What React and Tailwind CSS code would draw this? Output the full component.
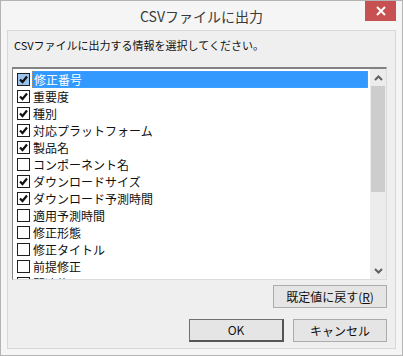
const items = [
  { label: '修正番号', checked: true },
  { label: '重要度', checked: true },
  { label: '種別', checked: true },
  { label: '対応プラットフォーム', checked: true },
  { label: '製品名', checked: true },
  { label: 'コンポーネント名', checked: false },
  { label: 'ダウンロードサイズ', checked: true },
  { label: 'ダウンロード予測時間', checked: true },
  { label: '適用予測時間', checked: false },
  { label: '修正形態', checked: false },
  { label: '修正タイトル', checked: false },
  { label: '前提修正', checked: false },
  { label: '関連修正', checked: false },
];

const font = "font-['Noto_Sans_CJK_JP','Liberation_Sans',sans-serif]";

const Check = ({ checked, focused }) => (
  <div
    className={`w-[13px] h-[13px] shrink-0 border border-[#1e1e1e] flex items-center justify-center ${
      focused ? 'bg-[#9cc3ee]' : 'bg-white'
    }`}
  >
    {checked && (
      <svg width="9" height="9" viewBox="0 0 9 9">
        <path d="M1 4.5 L3.5 7 L8 1.5" fill="none" stroke="#111" strokeWidth="2.2" />
      </svg>
    )}
  </div>
);

const Btn = ({ children, primary, className }) => (
  <button
    className={`h-[23px] bg-[#e5e5e5] text-[12px] text-[#111] flex items-center justify-center ${
      primary
        ? 'border border-[#707070] border-b-2 border-r-2 border-b-[#555] border-r-[#555]'
        : 'border border-[#acacac]'
    } ${className}`}
  >
    {children}
  </button>
);

const App = () => {
  return (
    <div className={`w-[403px] h-[356px] border border-[#b4b4b4] bg-[#f5f5f5] flex flex-col ${font}`}>
      <div className="h-[29px] shrink-0 relative flex items-center justify-center">
        <span className="text-[14px] text-[#3a3a3a] leading-none">CSVファイルに出力</span>
        <div className="absolute right-[6px] top-0 w-[31px] h-[20px] bg-[#c75050] flex items-center justify-center">
          <svg width="10" height="10" viewBox="0 0 10 10">
            <path d="M1 1 L9 9 M9 1 L1 9" stroke="#fff" strokeWidth="2" />
          </svg>
        </div>
      </div>
      <div className="flex-1 mx-[6px] mb-[6px] border border-[#d8d8d8] bg-[#efefef] flex flex-col">
        <div className="pl-[6px] pt-[7px] h-[36px] text-[11px] text-[#111] leading-[15px]">
          CSVファイルに出力する情報を選択してください。
        </div>
        <div className="ml-[4px] w-[375px] h-[213px] border-t-2 border-l border-[#828282] border-r border-b border-r-[#dcdcdc] border-b-[#dcdcdc] bg-white flex overflow-hidden">
          <div className="flex-1 pt-[2px] overflow-hidden">
            {items.map((it, i) => (
              <div key={it.label} className="h-[17px] flex items-center pl-[4px]">
                <Check checked={it.checked} focused={i === 0} />
                <div
                  className={`ml-[2px] h-[17px] flex items-center pl-[1px] text-[12px] leading-[14px] ${
                    i === 0
                      ? 'flex-1 bg-[#3399ff] text-white border border-dotted border-[#c88a3a]'
                      : 'text-[#111]'
                  }`}
                >
                  {it.label}
                </div>
              </div>
            ))}
          </div>
          <div className="w-[16px] shrink-0 bg-[#ececec] flex flex-col ml-[2px]">
            <div className="h-[17px] flex items-center justify-center">
              <svg width="9" height="6" viewBox="0 0 9 6">
                <path d="M1 5 L4.5 1.5 L8 5" fill="none" stroke="#606060" strokeWidth="2" />
              </svg>
            </div>
            <div className="h-[106px] mx-[1px] bg-[#cdcdcd]" />
            <div className="flex-1" />
            <div className="h-[17px] flex items-center justify-center">
              <svg width="9" height="6" viewBox="0 0 9 6">
                <path d="M1 1 L4.5 4.5 L8 1" fill="none" stroke="#606060" strokeWidth="2" />
              </svg>
            </div>
          </div>
        </div>
        <div className="flex justify-end pr-[8px] mt-[5px]">
          <Btn className="w-[114px]">既定値に戻す(<span className="underline">R</span>)</Btn>
        </div>
        <div className="flex justify-end gap-[9px] pr-[8px] mt-[11px]">
          <Btn primary className="w-[95px]">OK</Btn>
          <Btn className="w-[94px]">キャンセル</Btn>
        </div>
      </div>
    </div>
  );
};

export default App;
